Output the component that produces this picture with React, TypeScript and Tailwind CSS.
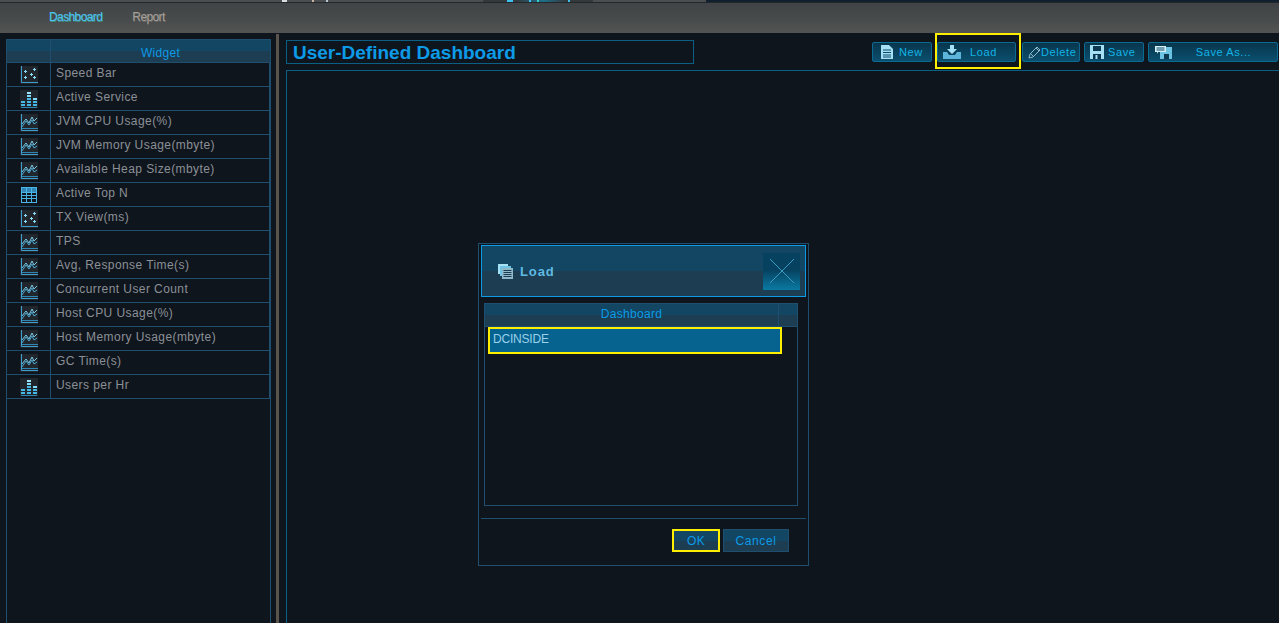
const FONT = "font-['Liberation_Sans',Arial,sans-serif]";

type IconKind = "scatter" | "bars" | "line" | "table";

const widgets: { label: string; icon: IconKind }[] = [
  { label: "Speed Bar", icon: "scatter" },
  { label: "Active Service", icon: "bars" },
  { label: "JVM CPU Usage(%)", icon: "line" },
  { label: "JVM Memory Usage(mbyte)", icon: "line" },
  { label: "Available Heap Size(mbyte)", icon: "line" },
  { label: "Active Top N", icon: "table" },
  { label: "TX View(ms)", icon: "scatter" },
  { label: "TPS", icon: "line" },
  { label: "Avg, Response Time(s)", icon: "line" },
  { label: "Concurrent User Count", icon: "line" },
  { label: "Host CPU Usage(%)", icon: "line" },
  { label: "Host Memory Usage(mbyte)", icon: "line" },
  { label: "GC Time(s)", icon: "line" },
  { label: "Users per Hr", icon: "bars" },
];

// bits of the clipped row above the nav bar
const topMarks = [
  { x: 282, w: 5, c: "#d8dde0" },
  { x: 312, w: 2, c: "#c9b7a4" },
  { x: 326, w: 2, c: "#b7c4cc" },
  { x: 507, w: 6, c: "#3cc0ee" },
  { x: 529, w: 2, c: "#3cc0ee" },
  { x: 537, w: 2, c: "#35d0c8" },
  { x: 568, w: 2, c: "#3cc0ee" },
];

function WidgetIcon({ kind }: { kind: IconKind }) {
  if (kind === "table") {
    return (
      <svg width="18" height="18" viewBox="0 0 18 18" fill="none">
        <rect x="2" y="2" width="14" height="4" fill="#2f86b4" />
        <rect x="1.500" y="1.500" width="15" height="15" stroke="#4cb4e4" />
        <path d="M1 6.500h16M1 9.500h16M1 12.500h16M6.500 1v16M11.500 1v16" stroke="#4cb4e4" />
      </svg>
    );
  }
  if (kind === "scatter") {
    return (
      <svg width="18" height="18" viewBox="0 0 18 18" className="bg-[#20262b]" fill="none">
        <path d="M1.500 0v16.500H18" stroke="#3f9fd0" />
        <path d="M4 5.500h3M5.500 4v3M13 3.500h3M14.500 2v3M10 8.500h3M11.500 7v3M4 11.500h3M5.500 10v3M13 11.500h3M14.500 10v3" stroke="#8adcf8" />
      </svg>
    );
  }
  if (kind === "bars") {
    return (
      <svg width="18" height="18" viewBox="0 0 18 18" className="bg-[#20262b]" fill="none">
        <g fill="#45b8e8">
          <rect x="1" y="11" width="4" height="2" />
          <rect x="1" y="14" width="4" height="2" />
          <rect x="7" y="2" width="4" height="2" fill="#9be6fb" />
          <rect x="7" y="5" width="4" height="2" fill="#82dcf8" />
          <rect x="7" y="8" width="4" height="2" />
          <rect x="7" y="11" width="4" height="2" />
          <rect x="7" y="14" width="4" height="2" />
          <rect x="13" y="8" width="4" height="2" fill="#82dcf8" />
          <rect x="13" y="11" width="4" height="2" />
          <rect x="13" y="14" width="4" height="2" />
          <rect x="1" y="17" width="16" height="1" fill="#2f86b4" />
        </g>
      </svg>
    );
  }
  return (
    <svg width="18" height="18" viewBox="0 0 18 18" className="bg-[#20262b]" fill="none">
      <path d="M1.500 0v16.500H18" stroke="#3f9fd0" />
      <path d="M2 10l4-5 3 4 3-6 2 4 3-3" stroke="#7accec" />
      <path d="M2 13l4-6 3 4 3-5 2 4 3-2" stroke="#4aa8d4" />
      <path d="M2 14.500h16" stroke="#2f86b4" />
    </svg>
  );
}

function Sidebar() {
  return (
    <aside className="ml-[6px] flex w-[265px] shrink-0 flex-col border-x border-[#1f4e6e]">
      <div className="flex h-[24px] shrink-0 border-y border-[#1f4e6e] bg-[linear-gradient(#124663_0%,#124663_50%,#1c3d52_50%,#1c3d52_100%)]">
        <div className="w-[44px] shrink-0 border-r border-[#1f4e6e]" />
        <div className="flex flex-1 items-center justify-center pt-[3px] text-[12px] tracking-[0.3px] text-[#0d9ae6]">Widget</div>
      </div>
      {widgets.map((w) => (
        <div key={w.label} className="flex h-[24px] shrink-0 border-b border-[#1f4e6e]">
          <div className="flex w-[44px] shrink-0 items-center justify-center border-r border-[#1f4e6e]">
            <WidgetIcon kind={w.icon} />
          </div>
          <div className="flex flex-1 items-center border-r border-[#1f4e6e] pb-[3px] pl-[5px] text-[12px] tracking-[0.42px] text-[#8b9096]">{w.label}</div>
        </div>
      ))}
    </aside>
  );
}

function ToolIcon({ kind }: { kind: string }) {
  if (kind === "new") {
    return (
      <svg width="14" height="14" viewBox="0 0 14 14">
        <path d="M1 0h8l4 4v10H1z" fill="#a5e0f5" />
        <path d="M3 5h8M3 7.500h8M3 10h8M3 12h8" stroke="#0d4a68" />
      </svg>
    );
  }
  if (kind === "load") {
    return (
      <svg width="18" height="14" viewBox="0 0 18 14">
        <path d="M7 0h4v4h3l-5 5-5-5h3z" fill="#a5e0f5" />
        <path d="M0 7h4l2 3h6l2-3h4v7H0z" fill="#5db6da" />
      </svg>
    );
  }
  if (kind === "delete") {
    return (
      <svg width="13" height="14" viewBox="0 0 13 14" fill="none">
        <path d="M1 13l1-4 7-7 3 3-7 7z" stroke="#8fb9c9" />
        <path d="M3 9l3 3M8 3l3 3" stroke="#8fb9c9" />
      </svg>
    );
  }
  if (kind === "saveas") {
    return (
      <svg width="19" height="14" viewBox="0 0 19 14">
        <path d="M6 2h12v12H6z" fill="#6ec2e2" />
        <path d="M10 9h5v5h-5z" fill="#0d3a52" />
        <path d="M1 1h11v6H4l-1 2V7H1z" fill="#d6f0fa" />
        <path d="M2.500 3h8M2.500 5h8" stroke="#0d4a68" />
      </svg>
    );
  }
  return (
    <svg width="14" height="14" viewBox="0 0 14 14">
      <path d="M0 0h14v14H0z" fill="#a5e0f5" />
      <path d="M3 1h8v5H3zM3 9h8v5H3z" fill="#0d3a52" />
      <path d="M5.500 10h2v4h-2z" fill="#a5e0f5" />
    </svg>
  );
}

function ToolButton({ kind, label, className, iconGap, center }: { kind: string; label: string; className: string; iconGap: string; center?: boolean }) {
  return (
    <button className={`flex h-[20px] items-center rounded-[2px] border border-[#0b6a92] bg-[linear-gradient(#08364d,#0b4f6e)] text-[11px] tracking-[0.6px] text-[#12b4e6] ${className}`}>
      <ToolIcon kind={kind} />
      <span className={`${iconGap} ${center ? "flex-1 text-center" : ""}`}>{label}</span>
    </button>
  );
}

function LoadDialog() {
  return (
    <div className="absolute left-[478px] top-[243px] flex h-[323px] w-[331px] flex-col border border-[#1f4e6e] bg-[#0f151d] px-[2px] pt-[1px]">
      <div className="flex h-[52px] shrink-0 items-center border border-[#0d9ae6] bg-[linear-gradient(#124663_0%,#124663_50%,#1c3d52_50%,#1c3d52_100%)] pl-[15px] pr-[5px]">
        <svg width="17" height="17" viewBox="0 0 17 17">
          <path d="M1 1h10v2H3v8H1z" fill="#a5e0f5" />
          <path d="M3 3h11v2H5v8H3z" fill="#6ec2e2" />
          <rect x="5" y="5" width="11" height="11" fill="#8fb9c9" />
          <path d="M6.500 7.500h8M6.500 9.500h8M6.500 11.500h8M6.500 13.500h8" stroke="#1c3d52" />
        </svg>
        <span className="ml-[6px] pt-[1px] text-[13px] font-bold tracking-[0.9px] text-[#5fbbe2]">Load</span>
        <button className="ml-auto h-[37px] w-[37px] bg-[linear-gradient(#06415f_0%,#06415f_45%,#0a7aa3_100%)]">
          <svg width="37" height="37" viewBox="0 0 37 37" fill="none">
            <path d="M7 6l24 24M31 6L7 30" stroke="#3a9cc0" />
          </svg>
        </button>
      </div>
      <div className="ml-[3px] mt-[6px] flex h-[203px] w-[314px] flex-col border border-[#1f4e6e]">
        <div className="flex h-[23px] shrink-0 border-b border-[#1f4e6e] bg-[linear-gradient(#124663_0%,#124663_50%,#1c3d52_50%,#1c3d52_100%)]">
          <div className="flex flex-1 items-center justify-center border-r border-[#1f4e6e] pb-[3px] text-[12px] tracking-[0.3px] text-[#0d9ae6]">Dashboard</div>
          <div className="w-[18px] shrink-0" />
        </div>
        <div className="ml-[3px] flex h-[27px] w-[294px] items-center border-[2px] border-[#ffee00] bg-[#06628f] pb-[3px] pl-[3px] text-[12px] tracking-[-0.2px] text-[#9ad0ea]">DCINSIDE</div>
      </div>
      <div className="mt-[12px] border-t border-[#1f4e6e]" />
      <div className="mt-[10px] flex justify-end gap-[3px] pr-[17px]">
        <button className="h-[23px] w-[48px] border-[2px] border-[#ffee00] bg-[linear-gradient(#124663_0%,#124663_50%,#1c3d52_50%,#1c3d52_100%)] text-[12px] tracking-[0.4px] text-[#0d9ae6]">OK</button>
        <button className="h-[23px] w-[66px] border border-[#1f4e6e] bg-[linear-gradient(#124663_0%,#124663_50%,#1c3d52_50%,#1c3d52_100%)] text-[12px] tracking-[0.6px] text-[#0d9ae6]">Cancel</button>
      </div>
    </div>
  );
}

export default function App() {
  return (
    <div className={`relative flex h-[623px] w-[1279px] flex-col overflow-hidden bg-[#0f151d] ${FONT}`}>
      <div className="relative flex h-[3px] shrink-0 border-b border-[#23272a]">
        <div className="w-[483px] bg-[#4a4e50]" />
        <div className="w-[110px] bg-[linear-gradient(90deg,#34393c_30%,#1f6f8a_55%,#34393c_75%)]" />
        <div className="w-[113px] bg-[#4a4e50]" />
        <div className="flex-1 bg-[#10202e]" />
        {topMarks.map((m) => (
          <span key={m.x} className="absolute top-0 h-[2px]" style={{ left: m.x, width: m.w, backgroundColor: m.c }} />
        ))}
      </div>
      <nav className="flex h-[30px] shrink-0 items-center bg-[linear-gradient(#404446,#464a4b_50%,#535353)] pb-[2px] pl-[49px] text-[12px] tracking-[-0.6px]">
        <span className="text-[#4fc3f7] [text-shadow:0.5px_0.5px_0_#3f8f7a]">Dashboard</span>
        <span className="ml-[30px] text-[#a39e98] [text-shadow:0.5px_0.5px_0_#6f6a66]">Report</span>
      </nav>
      <div className="flex min-h-0 flex-1 pt-[6px]">
        <Sidebar />
        <div className="ml-[5px] -mt-[5px] w-[3px] shrink-0 bg-[#5a534c]" />
        <main className="ml-[7px] flex min-w-0 flex-1 flex-col">
          <div className="flex h-[25px] shrink-0 items-start">
            <div className="mt-[1px] flex h-[24px] w-[408px] items-center border border-[#0b5f85] pl-[6px] text-[19px] font-bold leading-none text-[#0d9ae6]">User-Defined Dashboard</div>
            <div className="ml-[178px] flex items-start gap-[4px] pt-[3px]">
              <ToolButton kind="new" label="New" className="w-[60px] pl-[7px]" iconGap="ml-[5px]" />
              <div className="relative ml-[1px]">
                <ToolButton kind="load" label="Load" className="w-[79px] pl-[5px]" iconGap="ml-[9px]" />
                <div className="absolute -left-[2px] -top-[9px] h-[36px] w-[86px] border-[2px] border-[#ffee00]" />
              </div>
              <ToolButton kind="delete" label="Delete" className="ml-[2px] w-[58px] pl-[5px]" iconGap="" />
              <ToolButton kind="save" label="Save" className="w-[60px] pl-[5px]" iconGap="ml-[4px]" />
              <ToolButton kind="saveas" label="Save As..." className="w-[130px] pl-[5px] pr-[3px]" iconGap="" center />
            </div>
          </div>
          <div className="mt-[6px] flex-1 border-l border-t border-[#0b5f85]" />
        </main>
      </div>
      <LoadDialog />
    </div>
  );
}
